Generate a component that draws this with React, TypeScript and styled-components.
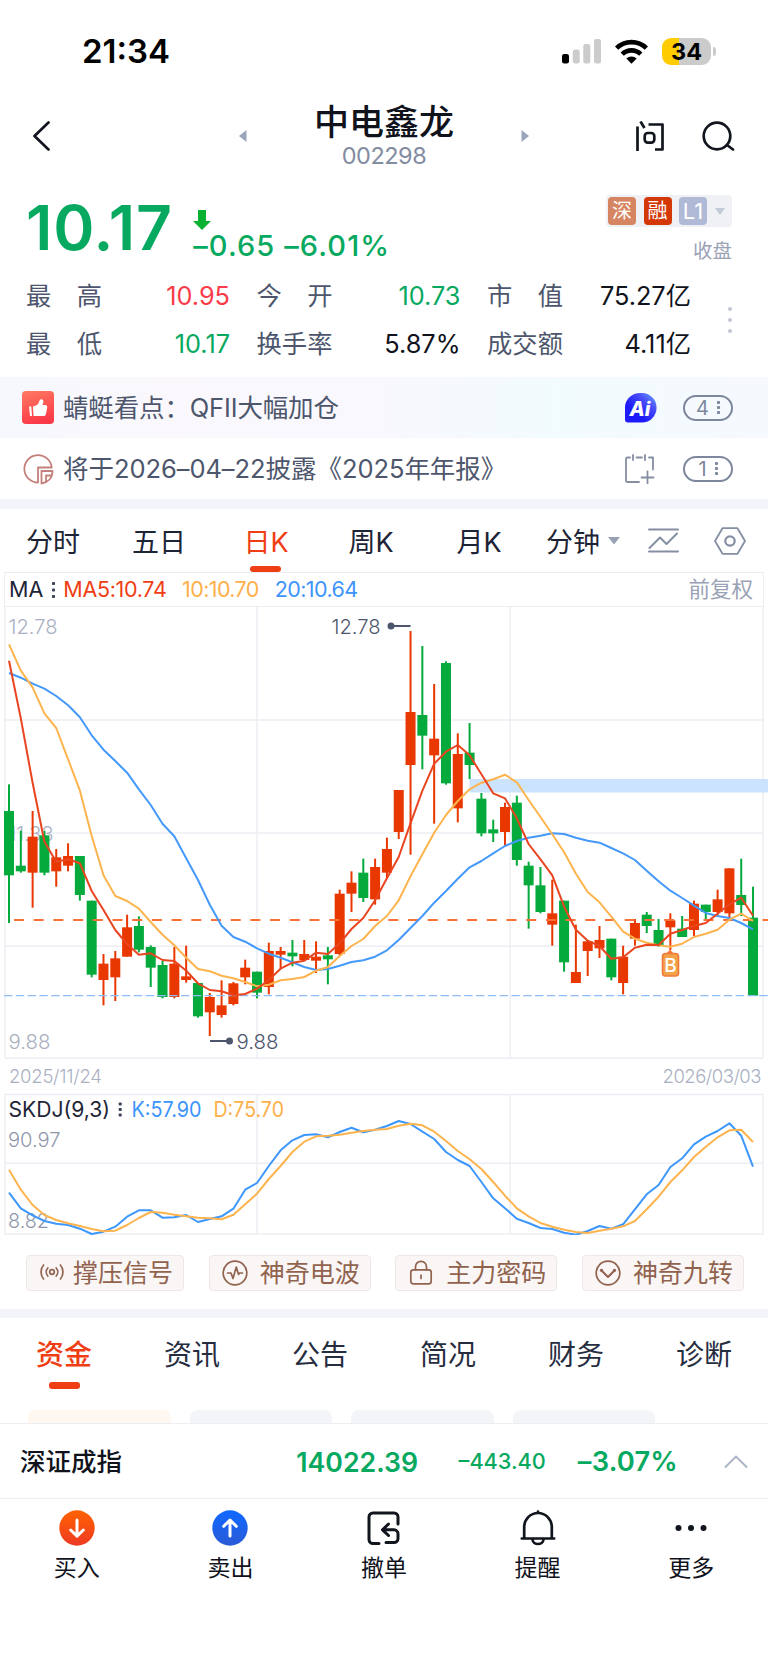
import React from "react";
import styled, { createGlobalStyle } from "styled-components";

const GREEN = "#07a960";
const RED = "#f03e14";
const INK = "#10131c";
const SLATE = "#4d566c";
const MUTED = "#9aa2b5";
const SANS = `Inter, "Noto Sans CJK SC", sans-serif`;

const Global = createGlobalStyle`
  body { margin: 0; background: #fff; font-family: ${SANS}; color: ${INK}; }
  * { box-sizing: border-box; }
  svg { display: block; flex: none; }
`;

const Page = styled.div`
  width: 768px;
  height: 1663px;
  overflow: hidden;
  background: #fff;
  display: flex;
  flex-direction: column;
  & > * { flex: none; }
`;

const Txt = styled.span<{ $size: number; $color?: string; $weight?: number; $ls?: number; $ml?: number }>`
  font-size: ${(p) => p.$size}px;
  color: ${(p) => p.$color ?? INK};
  font-weight: ${(p) => p.$weight ?? 400};
  letter-spacing: ${(p) => p.$ls ?? 0}px;
  margin-left: ${(p) => p.$ml ?? 0}px;
  line-height: 1;
  white-space: pre;
  flex: none;
`;

/* ---------- status bar and header ---------- */

const StatusBar = styled.header`
  height: 102px;
  padding: 1px 57px 0 82px;
  display: flex;
  align-items: center;
  justify-content: space-between;
`;
const StatusIcons = styled.div`
  display: flex;
  align-items: center;
  gap: 14px;
`;
const Battery = styled.div`
  position: relative;
  width: 49px;
  height: 27px;
  border-radius: 9px;
  background: linear-gradient(90deg, #ffcc00 35%, #cbcbcb 35%);
  display: flex;
  align-items: center;
  justify-content: center;
  &::after {
    content: "";
    position: absolute;
    left: 51px;
    top: 9px;
    width: 3px;
    height: 9px;
    border-radius: 0 4px 4px 0;
    background: #cbcbcb;
  }
`;
const Header = styled.div`
  height: 88px;
  display: grid;
  grid-template-columns: 232px 304px 232px;
  grid-template-rows: 88px;
`;
const HeaderSide = styled.div<{ $end?: boolean }>`
  display: flex;
  align-items: center;
  justify-content: ${(p) => (p.$end ? "flex-end" : "flex-start")};
  gap: 38px;
  padding: ${(p) => (p.$end ? "0 33px 20px 0" : "0 0 20px 32px")};
`;
const TitleRow = styled.div`
  display: flex;
  align-items: center;
  justify-content: space-between;
  padding: 0 7px 20px;
`;
const TitleStack = styled.div`
  height: 68px;
  display: flex;
  flex-direction: column;
  align-items: center;
  gap: 4px;
  padding-top: 3px;
`;

/* ---------- quote ---------- */

const Quote = styled.section`
  height: 187px;
  padding: 5px 36px 0 26px;
`;
const PriceRow = styled.div`
  height: 77px;
  display: flex;
  justify-content: space-between;
`;
const PriceLeft = styled.div`
  display: flex;
  padding-top: 1px;
`;
const ChangeCol = styled.div`
  display: flex;
  flex-direction: column;
  padding: 14px 0 0 20px;
  gap: 1px;
`;
const MarketCol = styled.div`
  display: flex;
  flex-direction: column;
  align-items: flex-end;
  gap: 14.5px;
`;
const BadgeBar = styled.div`
  width: 126px;
  height: 32px;
  padding-left: 2px;
  display: flex;
  align-items: center;
  gap: 7.5px;
  border-radius: 4px;
  background: #f0f1f4;
`;
const Badge = styled.span<{ $bg: string; $size?: number }>`
  width: 28px;
  height: 28px;
  border-radius: 4px;
  background: ${(p) => p.$bg};
  color: #fff;
  font-size: ${(p) => p.$size ?? 20}px;
  line-height: 28px;
  text-align: center;
`;
const StatsRow = styled.div`
  display: flex;
  align-items: center;
  justify-content: space-between;
`;
const StatsGrid = styled.div`
  display: grid;
  grid-template-columns: repeat(3, 204px);
  column-gap: 26.5px;
`;
const Stat = styled.div`
  height: 47.5px;
  display: flex;
  align-items: center;
  justify-content: space-between;
`;
const StatLabel = styled.div`
  width: 76px;
  display: flex;
  justify-content: space-between;
  font-size: 25.3px;
  line-height: 1;
  color: ${SLATE};
`;

/* ---------- notices ---------- */

const Notice = styled.div<{ $tinted?: boolean }>`
  height: 61px;
  padding: 0 35px 0 22px;
  display: flex;
  align-items: center;
  background: ${(p) =>
    p.$tinted
      ? "linear-gradient(90deg, #f6f8fd 0%, #faf8fd 22%, #f8f8fe 50%, #f2fbfe 72%, #f6f9fe 100%)"
      : "#fff"};
`;
const NoticeText = styled.div`
  width: 561px;
  margin-left: 9px;
  display: flex;
  align-items: center;
`;
const NoticeEnd = styled.div`
  flex: 1;
  display: flex;
  align-items: center;
  justify-content: space-between;
`;
const NoticeIcon = styled.div`
  width: 32px;
  flex: none;
`;
const Pill = styled.div`
  width: 50px;
  height: 26px;
  border: 2px solid #7d879d;
  border-radius: 13px;
  display: flex;
  align-items: center;
  justify-content: center;
  gap: 8px;
`;
const Band = styled.div<{ $h: number }>`
  height: ${(p) => p.$h}px;
  background: #f3f4f9;
`;

/* ---------- period tabs ---------- */

const Periods = styled.nav`
  height: 63px;
  padding: 0 22px 0 26px;
  display: flex;
  align-items: center;
`;
const Period = styled.div<{ $w: number; $active?: boolean }>`
  width: ${(p) => p.$w}px;
  height: 63px;
  padding-top: 3px;
  display: flex;
  align-items: center;
  position: relative;
  font-size: 27px;
  line-height: 1;
  white-space: nowrap;
  color: ${(p) => (p.$active ? RED : "#1d2436")};
  &::after {
    content: "";
    display: ${(p) => (p.$active ? "block" : "none")};
    position: absolute;
    left: 6px;
    bottom: 0;
    width: 31px;
    height: 6px;
    border-radius: 3px;
    background: ${RED};
  }
`;
const PeriodTools = styled.div`
  flex: 1;
  display: flex;
  align-items: center;
  justify-content: space-between;
`;

/* ---------- charts ---------- */

const Legend = styled.div`
  height: 35px;
  margin: 0 4px;
  padding: 0 10px 0 4px;
  border: 1.5px solid #eceef3;
  display: flex;
  align-items: center;
`;
const Spacer = styled.span`
  flex: 1;
`;
const Dates = styled.div`
  height: 34px;
  padding: 0 7px 0 9px;
  display: flex;
  align-items: center;
  justify-content: space-between;
`;
const Chips = styled.div`
  height: 74px;
  padding: 20px 24px 0 26px;
  display: flex;
  justify-content: space-between;
`;
const Chip = styled.div<{ $w: number }>`
  width: ${(p) => p.$w}px;
  height: 36px;
  padding: 0 10px 0 12px;
  border: 1px solid #efe7e5;
  border-radius: 4px;
  background: #faf6f5;
  display: flex;
  align-items: center;
  justify-content: space-between;
`;

/* ---------- lower part ---------- */

const Sections = styled.nav`
  height: 92px;
  display: grid;
  grid-template-columns: repeat(6, 128px);
`;
const Section = styled.div<{ $active?: boolean }>`
  position: relative;
  height: 73px;
  padding-top: 1px;
  display: flex;
  align-items: center;
  justify-content: center;
  font-size: 28px;
  line-height: 1;
  font-weight: ${(p) => (p.$active ? 500 : 400)};
  color: ${(p) => (p.$active ? RED : "#262d3f")};
  &::after {
    content: "";
    display: ${(p) => (p.$active ? "block" : "none")};
    position: absolute;
    left: 49px;
    bottom: 2px;
    width: 31px;
    height: 7px;
    border-radius: 3px;
    background: ${RED};
  }
`;
const Stubs = styled.div`
  height: 13px;
  padding-left: 28px;
  display: flex;
  gap: 19px;
`;
const Stub = styled.div<{ $warm?: boolean }>`
  width: 142.5px;
  height: 13px;
  border-radius: 8px 8px 0 0;
  background: ${(p) => (p.$warm ? "#fff7f0" : "#f4f5f9")};
`;
const IndexRow = styled.div`
  height: 75px;
  padding: 2px 20px 0 20px;
  border-top: 1.5px solid #eceef2;
  display: flex;
  align-items: center;
`;
const Actions = styled.footer`
  height: 165px;
  border-top: 1.5px solid #eceef2;
  display: grid;
  grid-template-columns: repeat(5, 153.6px);
`;
const Action = styled.div`
  display: flex;
  flex-direction: column;
  align-items: center;
  padding-top: 11px;
  gap: 11px;
`;

/* ---------- data ---------- */

type Candle = [up: 0 | 1, high: number, top: number, bottom: number, low: number];

const CANDLES: Candle[] = [
  [0, 553, 633, 826, 969], [0, 692, 797, 814, 818], [1, 633, 710, 818, 923], [0, 692, 706, 818, 826],
  [1, 747, 772, 814, 860], [1, 730, 768, 797, 814], [0, 768, 768, 885, 902], [0, 902, 902, 1124, 1132],
  [1, 1062, 1091, 1140, 1216], [1, 1053, 1075, 1132, 1203], [1, 944, 982, 1070, 1070], [0, 949, 978, 1049, 1057],
  [0, 1036, 1041, 1103, 1161], [0, 1083, 1095, 1191, 1195], [1, 1041, 1091, 1191, 1195], [1, 1037, 1129, 1140, 1148],
  [0, 1149, 1149, 1249, 1253], [1, 1179, 1191, 1237, 1308], [1, 1141, 1216, 1245, 1253], [1, 1146, 1150, 1212, 1216],
  [1, 1079, 1103, 1132, 1153], [0, 1115, 1115, 1178, 1195], [1, 1028, 1053, 1161, 1183], [1, 1041, 1053, 1064, 1107],
  [0, 1020, 1058, 1069, 1099], [1, 1020, 1062, 1080, 1082], [1, 1024, 1070, 1082, 1119], [0, 1041, 1066, 1078, 1153],
  [1, 869, 881, 1062, 1066], [1, 814, 848, 881, 936], [0, 776, 818, 894, 906], [1, 776, 801, 898, 914],
  [1, 713, 747, 818, 836], [1, 570, 570, 696, 717], [1, 93, 336, 495, 764], [0, 138, 345, 407, 508],
  [1, 252, 416, 466, 671], [0, 184, 189, 550, 554], [1, 400, 462, 625, 667], [0, 369, 458, 495, 537],
  [0, 579, 596, 700, 709], [0, 659, 688, 700, 726], [1, 608, 621, 696, 737], [0, 587, 608, 780, 797],
  [0, 785, 797, 856, 986], [0, 801, 856, 936, 940], [1, 839, 940, 974, 1037], [0, 902, 902, 1087, 1115],
  [1, 974, 1116, 1149, 1149], [1, 1020, 1024, 1053, 1128], [1, 978, 1020, 1045, 1074], [0, 1016, 1016, 1132, 1141],
  [1, 1037, 1070, 1149, 1183], [1, 957, 969, 1016, 1037], [0, 936, 944, 978, 999], [0, 957, 990, 1037, 1040],
  [1, 940, 961, 982, 1050], [0, 948, 986, 1011, 1011], [1, 902, 911, 990, 1008], [0, 914, 914, 936, 960],
  [1, 869, 898, 936, 945], [1, 805, 805, 940, 957], [0, 776, 885, 915, 948], [0, 860, 953, 1187, 1187],
];
const MA5 = [182, 355, 548, 725, 785, 778, 790, 873, 930, 990, 1032, 1064, 1060, 1080, 1083, 1112, 1150, 1170, 1174, 1186, 1182, 1166, 1140, 1106, 1088, 1082, 1058, 1062, 1030, 987, 954, 901, 835, 771, 670, 572, 491, 455, 435, 466, 523, 580, 595, 655, 732, 778, 826, 920, 989, 1022, 1038, 1076, 1072, 1043, 1034, 1035, 1001, 990, 978, 969, 941, 913, 893, 947];
const MA10 = [133, 212, 262, 340, 384, 478, 572, 708, 826, 888, 903, 926, 966, 1004, 1036, 1073, 1107, 1114, 1127, 1135, 1146, 1159, 1154, 1141, 1137, 1131, 1112, 1101, 1068, 1038, 1017, 978, 948, 901, 829, 763, 698, 645, 603, 568, 548, 538, 524, 547, 600, 651, 703, 757, 821, 876, 907, 950, 995, 1016, 1028, 1036, 1040, 1031, 1011, 1001, 989, 959, 941, 963];
const MA20 = [219, 233, 251, 266, 288, 316, 352, 406, 449, 483, 518, 568, 615, 671, 709, 775, 840, 914, 977, 1011, 1025, 1045, 1061, 1073, 1087, 1101, 1110, 1107, 1097, 1086, 1081, 1070, 1051, 1020, 984, 948, 908, 873, 836, 802, 783, 760, 738, 723, 713, 707, 700, 702, 713, 722, 728, 744, 760, 780, 812, 844, 872, 894, 917, 939, 948, 954, 969, 988];
const K_LINE = [413, 460, 481, 498, 506, 510, 521, 537, 530, 515, 485, 466, 466, 488, 487, 480, 501, 492, 484, 461, 404, 384, 333, 286, 256, 240, 238, 247, 231, 218, 232, 224, 213, 198, 207, 230, 252, 291, 315, 333, 381, 430, 460, 491, 504, 519, 522, 533, 539, 528, 513, 521, 508, 463, 418, 390, 336, 310, 268, 245, 228, 205, 242, 335];
const D_LINE = [344, 404, 450, 480, 495, 505, 513, 522, 529, 527, 510, 489, 471, 473, 479, 484, 488, 490, 493, 479, 448, 416, 372, 333, 291, 260, 244, 242, 239, 233, 228, 224, 222, 212, 206, 211, 230, 258, 288, 313, 342, 381, 422, 460, 484, 504, 515, 524, 531, 534, 527, 521, 514, 498, 463, 425, 381, 346, 306, 275, 247, 226, 224, 261];

const xAt = (i: number) => 9 + i * 11.81;
const yMain = (v: number) => v / 3 - 7;
const ySub = (v: number) => v / 3 - 38;
const points = (values: number[], y: (v: number) => number) =>
  values.map((v, i) => `${xAt(i).toFixed(1)},${y(v).toFixed(1)}`).join(" ");

const MoreDots = ({ ml = 0, h = 16, color = "#39425a" }: { ml?: number; h?: number; color?: string }) => (
  <svg width="3" height={h} viewBox={`0 0 3 ${h}`} style={{ marginLeft: ml }}>
    {[1.5, h / 2, h - 1.5].map((y) => (
      <rect key={y} x="0" y={y - 1.5} width="3" height="3" rx="0.8" fill={color} />
    ))}
  </svg>
);

const MainChart = () => (
  <svg width="768" height="452" viewBox="0 0 768 452" fontFamily={SANS}>
    <g stroke="#eceef3" strokeWidth="1.5" fill="none">
      <path d="M5 0V451M763 0V451M257 0V451M510 0V451M5 113H763M5 226H763M5 339.2H763M5 451.2H763" />
    </g>
    <g fontSize="20" fontWeight="300" fill="#a9b0c1">
      <text x="8.5" y="26.5" textLength="49" lengthAdjust="spacingAndGlyphs">12.78</text>
      <text x="8.5" y="234" textLength="45" lengthAdjust="spacingAndGlyphs">11.33</text>
      <text x="8.5" y="442" textLength="42" lengthAdjust="spacingAndGlyphs">9.88</text>
    </g>
    <rect x="469.5" y="172" width="298.5" height="13.5" fill="#cce3fd" />
    {CANDLES.map(([up, high, top, bottom, low], i) => {
      const color = up ? "#e83800" : "#04aa3c";
      return (
        <g key={i} fill={color}>
          <rect x={xAt(i) - 1} y={yMain(high)} width="2" height={(low - high) / 3} />
          <rect x={xAt(i) - 5} y={yMain(top)} width="10" height={Math.max((bottom - top) / 3, 2)} />
        </g>
      );
    })}
    <path d="M14 313H768" stroke="#fb7037" strokeWidth="2.2" strokeDasharray="10 9.7" />
    <path d="M4 388.7H768" stroke="#8dbcf8" strokeWidth="1.3" strokeDasharray="8.4 3.4" />
    <g fill="none" strokeWidth="2" strokeLinejoin="round">
      <polyline points={points(MA20, yMain)} stroke="#4499fb" />
      <polyline points={points(MA10, yMain)} stroke="#fdb44f" />
      <polyline points={points(MA5, yMain)} stroke="#ea4521" />
    </g>
    <g stroke="#4d566c" strokeWidth="2" fill="#4d566c">
      <path d="M391 19H410.5" />
      <circle cx="391" cy="19" r="2.5" />
      <path d="M210 434H229" />
      <circle cx="229.5" cy="434" r="2.5" />
    </g>
    <g fontSize="20" fontWeight="300" fill="#4d566c">
      <text x="331.5" y="26.5" textLength="49" lengthAdjust="spacingAndGlyphs">12.78</text>
      <text x="236.5" y="442" textLength="42" lengthAdjust="spacingAndGlyphs">9.88</text>
    </g>
    <path d="M666 347l4-4.500 4 4.500z" fill="#f0793a" />
    <rect x="662.5" y="346.5" width="16" height="22.5" rx="3" fill="#f3a24a" stroke="#f0793a" strokeWidth="1.6" />
    <text x="670.5" y="364.5" fontSize="19" fontWeight="500" fill="#fff" textAnchor="middle">B</text>
  </svg>
);

const SubChart = () => (
  <svg width="768" height="142" viewBox="0 0 768 142" fontFamily={SANS}>
    <path
      d="M5 1.500H763V141H5ZM257 1.500V141M510 1.500V141M5 70.300H763"
      stroke="#eceef3"
      strokeWidth="1.5"
      fill="none"
    />
    <g fontSize="21">
      <text x="8.5" y="23.8" fill="#1d2436" textLength="101.5" lengthAdjust="spacingAndGlyphs">SKDJ(9,3)</text>
      <text x="131.5" y="23.8" fill="#3d94fb" textLength="70" lengthAdjust="spacingAndGlyphs">K:57.90</text>
      <text x="213.5" y="23.8" fill="#fdb04a" textLength="70.5" lengthAdjust="spacingAndGlyphs">D:75.70</text>
    </g>
    <g fill="#39425a">
      <rect x="118.7" y="9.5" width="3" height="3" rx="0.8" />
      <rect x="118.7" y="15" width="3" height="3" rx="0.8" />
      <rect x="118.7" y="20.5" width="3" height="3" rx="0.8" />
    </g>
    <g fontSize="20" fontWeight="300" fill="#8f98ab">
      <text x="8" y="54" textLength="52.5" lengthAdjust="spacingAndGlyphs">90.97</text>
      <text x="8" y="135" textLength="41" lengthAdjust="spacingAndGlyphs">8.82</text>
    </g>
    <g fill="none" strokeWidth="2" strokeLinejoin="round">
      <polyline points={points(K_LINE, ySub)} stroke="#3d97fc" />
      <polyline points={points(D_LINE, ySub)} stroke="#fdb44f" />
    </g>
  </svg>
);

/* ---------- icons ---------- */

const brown = { fill: "none", stroke: "#91634f", strokeWidth: 1.7, strokeLinecap: "round", strokeLinejoin: "round" } as const;
const dark = { fill: "none", stroke: "#11151d", strokeWidth: 2.7, strokeLinecap: "round", strokeLinejoin: "round" } as const;
const gray = { fill: "none", stroke: "#858ea3", strokeWidth: 1.8, strokeLinecap: "round", strokeLinejoin: "round" } as const;

const SignalWaveIcon = () => (
  <svg width="26" height="26" viewBox="0 0 26 26">
    <g {...brown} transform="translate(0 -1)">
      <circle cx="13" cy="13" r="2.3" />
      <path d="M8.800 9a6 6 0 0 0 0 8M17.200 9a6 6 0 0 1 0 8M4.600 6C1.200 9.600 1.200 16.400 4.600 20M21.400 6C24.800 9.600 24.800 16.400 21.400 20" />
    </g>
  </svg>
);
const PulseIcon = () => (
  <svg width="26" height="26" viewBox="0 0 26 26">
    <g {...brown}>
      <circle cx="13" cy="13" r="11.8" />
      <path d="M5.500 13H9L11 18.500 14.300 7 16.500 14.500 17.500 13H20.500" />
    </g>
  </svg>
);
const LockIcon = () => (
  <svg width="26" height="26" viewBox="0 0 26 26">
    <g {...brown}>
      <rect x="2.8" y="9.8" width="20.4" height="14" rx="2.5" />
      <path d="M7.500 9.800V6.800a5.500 5.500 0 0 1 11 0V9.800M13 15V18.500" />
    </g>
  </svg>
);
const NineIcon = () => (
  <svg width="26" height="26" viewBox="0 0 26 26">
    <g {...brown}>
      <circle cx="13" cy="13" r="11.8" />
      <path d="M6.500 10.500L13 17 19.500 10.500" strokeWidth="2" />
    </g>
    <circle cx="6.5" cy="10.3" r="1.6" fill="#91634f" />
    <circle cx="19.5" cy="10.3" r="1.6" fill="#91634f" />
  </svg>
);

const PERIODS: [string, number][] = [["分时", 106], ["五日", 111.5], ["日K", 105], ["周K", 108], ["月K", 89.5], ["分钟", 61.5]];
const STATS: [string, string, string][] = [
  ["最高", "10.95", "#fb3b49"], ["今开", "10.73", GREEN], ["市值", "75.27亿", INK],
  ["最低", "10.17", GREEN], ["换手率", "5.87%", INK], ["成交额", "4.11亿", INK],
];

export default function App() {
  return (
    <Page>
      <Global />
      <StatusBar>
        <Txt $size={33} $weight={600} $color="#000">21:34</Txt>
        <StatusIcons>
          <svg width="39" height="25" viewBox="0 0 39 25">
            <rect x="0" y="15" width="7" height="9.5" rx="2.2" fill="#000" />
            <rect x="10.7" y="10.5" width="7" height="14" rx="2.2" fill="#ccc" />
            <rect x="21.3" y="5" width="7" height="19.5" rx="2.2" fill="#ccc" />
            <rect x="32" y="0" width="7" height="24.5" rx="2.2" fill="#ccc" />
          </svg>
          <svg width="33" height="25" viewBox="0 0 33 25">
            <g fill="none" stroke="#000" strokeWidth="4.6">
              <path d="M1.600 9.200a21.200 21.200 0 0 1 29.800 0" />
              <path d="M7.200 15.200a13.200 13.200 0 0 1 18.600 0" />
            </g>
            <path d="M11.300 19.600a7.400 7.400 0 0 1 10.400 0L16.500 24.800z" fill="#000" />
          </svg>
          <Battery>
            <Txt $size={23.5} $weight={650} $color="#000">34</Txt>
          </Battery>
        </StatusIcons>
      </StatusBar>

      <Header>
        <HeaderSide>
          <svg width="19" height="30" viewBox="0 0 19 30">
            <path d="M16.500 1.500L2.500 15 16.500 28.500" {...dark} />
          </svg>
        </HeaderSide>
        <TitleRow>
          <svg width="8" height="12" viewBox="0 0 8 12"><path d="M7.500 0V12L0 6z" fill="#9aa5bb" /></svg>
          <TitleStack>
            <Txt $size={35} $weight={500}>中电鑫龙</Txt>
            <Txt $size={23.5} $color="#838ca1" $ls={-0.5}>002298</Txt>
          </TitleStack>
          <svg width="8" height="12" viewBox="0 0 8 12"><path d="M0.500 0V12L8 6z" fill="#9aa5bb" /></svg>
        </TitleRow>
        <HeaderSide $end>
          <svg width="28" height="30" viewBox="0 0 28 30">
            <g {...dark} strokeLinecap="butt">
              <path d="M1.500 5.500V30M4.500 0.500L8.500 7M12.500 3.500H26.500V28.500H19" />
              <rect x="8.7" y="12" width="9.6" height="9.6" rx="3" />
            </g>
          </svg>
          <svg width="33" height="30" viewBox="0 0 33 30">
            <g {...dark}>
              <circle cx="15" cy="15" r="13.3" />
              <path d="M25 24L31 28.500" />
            </g>
          </svg>
        </HeaderSide>
      </Header>

      <Quote>
        <PriceRow>
          <PriceLeft>
            <Txt $size={62.5} $weight={600} $color={GREEN} $ls={0.8}>10.17</Txt>
            <ChangeCol>
              <svg width="18" height="20" viewBox="0 0 18 20"><path d="M5 0H13V11H18L9 20 0 11H5z" fill="#09b232" /></svg>
              <Txt $size={29} $weight={550} $color={GREEN} $ls={1.1} $ml={0.5}>–0.65 –6.01%</Txt>
            </ChangeCol>
          </PriceLeft>
          <MarketCol>
            <BadgeBar>
              <Badge $bg="#d58561">深</Badge>
              <Badge $bg="#d43806">融</Badge>
              <Badge $bg="#b0b9d6" $size={22}>L1</Badge>
              <svg width="10" height="7" viewBox="0 0 10 7"><path d="M0 0H10L5 7z" fill="#c3cad7" /></svg>
            </BadgeBar>
            <Txt $size={19.5} $color={MUTED}>收盘</Txt>
          </MarketCol>
        </PriceRow>
        <StatsRow>
          <StatsGrid>
            {STATS.map(([label, value, color]) => (
              <Stat key={label}>
                <StatLabel>{[...label].map((c) => <span key={c}>{c}</span>)}</StatLabel>
                <Txt $size={25.3} $color={color}>{value}</Txt>
              </Stat>
            ))}
          </StatsGrid>
          <svg width="4" height="26" viewBox="0 0 4 26">
            {[2, 13, 24].map((y) => <circle key={y} cx="2" cy={y} r="2" fill="#c2c7d3" />)}
          </svg>
        </StatsRow>
      </Quote>

      <Notice $tinted>
        <NoticeIcon>
          <svg width="32" height="33" viewBox="0 0 32 33">
            <defs>
              <linearGradient id="like" x1="0" y1="0" x2="0.3" y2="1">
                <stop offset="0" stopColor="#ff7a62" />
                <stop offset="1" stopColor="#fb3b49" />
              </linearGradient>
            </defs>
            <rect width="32" height="33" rx="4" fill="url(#like)" />
            <path d="M7 15.500L9.300 15.500 10 25H8z" fill="#fff" />
            <path d="M11.500 25L11 15.500 15 14C17 12.500 17 9.500 18.500 8.500C20.500 7.700 21.800 9.500 21.300 11.500L20.500 14H23C24.800 14 25.500 15 25.200 16.500L24 23C23.600 24.500 22.800 25 21.500 25z" fill="#fff" />
          </svg>
        </NoticeIcon>
        <NoticeText>
          <Txt $size={25.5} $color={SLATE} $ls={-0.15}>蜻蜓看点：QFII大幅加仓</Txt>
        </NoticeText>
        <NoticeEnd>
          <svg width="33" height="30" viewBox="0 0 33 30">
            <defs>
              <linearGradient id="ai" x1="0" y1="1" x2="1" y2="0">
                <stop offset="0.35" stopColor="#1d1bfa" />
                <stop offset="0.7" stopColor="#4a50f8" />
                <stop offset="1" stopColor="#67b6ff" />
              </linearGradient>
            </defs>
            <path d="M1 14.500A15 14.500 0 0 1 16 0H18A14.500 14.700 0 0 1 18 29.500H4A3 3 0 0 1 1 26.500z" fill="url(#ai)" />
            <text x="16" y="22.5" fontFamily={SANS} fontSize="20" fontWeight="800" fontStyle="italic" fill="#fff" textAnchor="middle" textLength="21" lengthAdjust="spacingAndGlyphs">Ai</text>
          </svg>
          <Pill><Txt $size={20} $color="#7d879d">4</Txt><MoreDots h={13} color="#7d879d" /></Pill>
        </NoticeEnd>
      </Notice>
      <Notice>
        <NoticeIcon>
          <svg width="32" height="32" viewBox="0 0 32 32">
            <g fill="none" stroke="#c4807c" strokeWidth="1.8" strokeLinejoin="round">
              <path d="M16 29.500A13.700 13.700 0 1 1 29.700 14.500H16z" />
              <path d="M19.500 18H30.500C30.500 25 26 29.500 19.500 30.500z" />
              <path d="M24 30V22.500H30" />
            </g>
          </svg>
        </NoticeIcon>
        <NoticeText>
          <Txt $size={25.5} $color={SLATE} $ls={-0.05}>将于2026–04–22披露《2025年年报》</Txt>
        </NoticeText>
        <NoticeEnd>
          <svg width="32" height="30" viewBox="0 0 32 30">
            <g {...gray}>
              <path d="M6 3.500H3.500A1.500 1.500 0 0 0 2 5V26.500A1.500 1.500 0 0 0 3.500 28H15M12.500 3.500H18M25 3.500H29V15.500M9 1V6M21 1V6M23.500 17.500V29.500M17.500 23.500H29.500" />
            </g>
          </svg>
          <Pill><Txt $size={20} $color="#7d879d">1</Txt><MoreDots h={13} color="#7d879d" /></Pill>
        </NoticeEnd>
      </Notice>
      <Band $h={10} />

      <Periods>
        {PERIODS.map(([label, w]) => (
          <Period key={label} $w={w} $active={label === "日K"}>{label}</Period>
        ))}
        <PeriodTools>
          <svg width="12" height="8" viewBox="0 0 12 8"><path d="M0 0H12L6 7.500z" fill="#98a1b3" /></svg>
          <svg width="31" height="25" viewBox="0 0 31 25" style={{ marginLeft: -6 }}>
            <path d="M1 1.500H30M1 23.500H30M1.500 20L12 9.500 18.500 16 29 5.500" {...gray} strokeWidth="2" />
          </svg>
          <svg width="32" height="28" viewBox="0 0 32 28">
            <g {...gray}>
              <path d="M8.500 1.200H23.500L31 14 23.500 26.800H8.500L1 14z" />
              <circle cx="16" cy="14" r="4.7" strokeWidth="2.2" />
            </g>
          </svg>
        </PeriodTools>
      </Periods>

      <Legend>
        <Txt $size={21.5} $color="#1d2436">MA</Txt>
        <MoreDots ml={9} />
        <Txt $size={21.5} $color={RED} $ml={8} $ls={-0.3}>MA5:10.74</Txt>
        <Txt $size={21.5} $color="#fdb04a" $ml={15.5} $ls={-0.6}>10:10.70</Txt>
        <Txt $size={21.5} $color="#3d94fb" $ml={16} $ls={-0.6}>20:10.64</Txt>
        <Spacer />
        <Txt $size={21.5} $color={MUTED}>前复权</Txt>
      </Legend>
      <MainChart />
      <Dates>
        <Txt $size={18.5} $weight={300} $color="#a9b0c1" $ls={-0.25}>2025/11/24</Txt>
        <Txt $size={18.5} $weight={300} $color="#a9b0c1" $ls={-0.5}>2026/03/03</Txt>
      </Dates>
      <SubChart />

      <Chips>
        <Chip $w={158}><SignalWaveIcon /><Txt $size={25} $color="#91634f">撑压信号</Txt></Chip>
        <Chip $w={162}><PulseIcon /><Txt $size={25} $color="#91634f">神奇电波</Txt></Chip>
        <Chip $w={162}><LockIcon /><Txt $size={25} $color="#91634f">主力密码</Txt></Chip>
        <Chip $w={162}><NineIcon /><Txt $size={25} $color="#91634f">神奇九转</Txt></Chip>
      </Chips>
      <Band $h={9} />

      <Sections>
        {["资金", "资讯", "公告", "简况", "财务", "诊断"].map((s, i) => (
          <Section key={s} $active={i === 0}>{s}</Section>
        ))}
      </Sections>
      <Stubs>
        <Stub $warm /><Stub /><Stub /><Stub />
      </Stubs>
      <IndexRow>
        <Txt $size={25.5} $weight={500}>深证成指</Txt>
        <Spacer />
        <Txt $size={26.7} $weight={600} $color={GREEN}>14022.39</Txt>
        <Txt $size={21.7} $weight={550} $color={GREEN} $ml={40.5}>–443.40</Txt>
        <Txt $size={27.3} $weight={600} $color={GREEN} $ml={32} $ls={0.2}>–3.07%</Txt>
        <svg width="24" height="14" viewBox="0 0 24 14" style={{ marginLeft: 46 }}>
          <path d="M1 12.500L12 1.500 23 12.500" fill="none" stroke="#a9b1c6" strokeWidth="1.8" />
        </svg>
      </IndexRow>
      <Actions>
        <Action>
          <svg width="36" height="36" viewBox="0 0 36 36">
            <defs><linearGradient id="buy" x1="0" y1="0" x2="0" y2="1"><stop offset="0" stopColor="#ff6200" /><stop offset="1" stopColor="#ee3a24" /></linearGradient></defs>
            <circle cx="18" cy="18" r="17.7" fill="url(#buy)" />
            <path d="M18 10V26M11.700 20L18 26.300 24.300 20" fill="none" stroke="#fff" strokeWidth="3" strokeLinecap="round" strokeLinejoin="round" />
          </svg>
          <Txt $size={23}>买入</Txt>
        </Action>
        <Action>
          <svg width="36" height="36" viewBox="0 0 36 36">
            <defs><linearGradient id="sell" x1="0" y1="0" x2="0" y2="1"><stop offset="0" stopColor="#0f68ff" /><stop offset="1" stopColor="#2b5bd7" /></linearGradient></defs>
            <circle cx="18" cy="18" r="17.7" fill="url(#sell)" />
            <path d="M18 26V10.500M11.700 16.300L18 10 24.300 16.300" fill="none" stroke="#fff" strokeWidth="3" strokeLinecap="round" strokeLinejoin="round" />
          </svg>
          <Txt $size={23}>卖出</Txt>
        </Action>
        <Action>
          <svg width="36" height="36" viewBox="0 0 36 36">
            <path d="M13 33.500H7A4 4 0 0 1 3 29.500V7A4 4 0 0 1 7 3H28A4 4 0 0 1 32 7V14M22.500 14L16.500 19.800 22.500 25.500M17 19.800H28A4 4 0 0 1 32 23.800V28.500A4 4 0 0 1 28 32.500H20" {...dark} strokeWidth="3" />
          </svg>
          <Txt $size={23}>撤单</Txt>
        </Action>
        <Action>
          <svg width="36" height="36" viewBox="0 0 36 36">
            <path d="M1.800 28.500H34.200M4.200 28.500V17A13.800 14 0 0 1 31.800 17V28.500M18 1.500V3M12.500 29.500C13 35.500 23 35.500 23.500 29.500" {...dark} />
          </svg>
          <Txt $size={23}>提醒</Txt>
        </Action>
        <Action>
          <svg width="36" height="36" viewBox="0 0 36 36">
            {[5.5, 18, 30.5].map((x) => <circle key={x} cx={x} cy="18" r="3" fill="#11151d" />)}
          </svg>
          <Txt $size={23}>更多</Txt>
        </Action>
      </Actions>
    </Page>
  );
}
